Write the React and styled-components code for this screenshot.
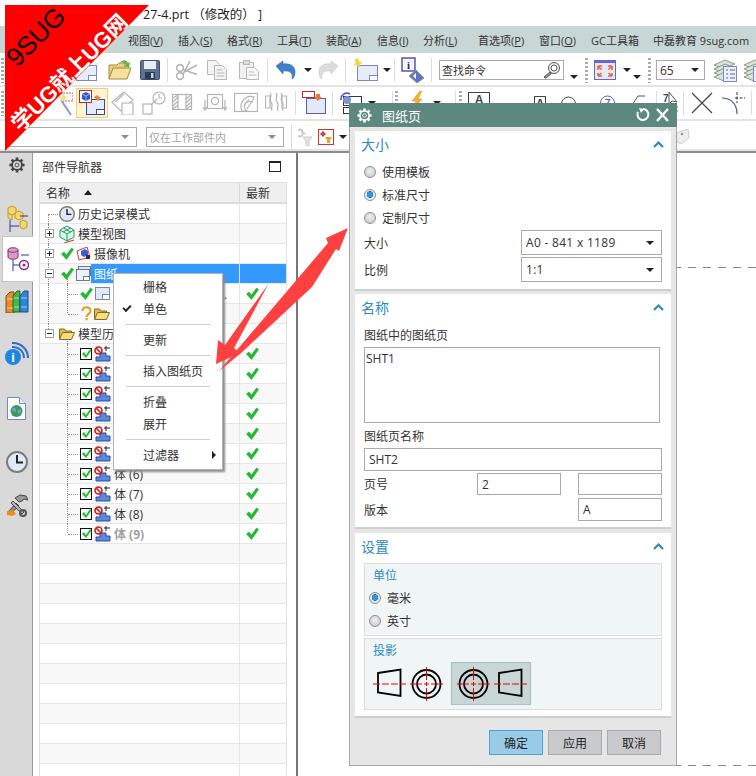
import styled, { createGlobalStyle } from "styled-components";

const GlobalStyle = createGlobalStyle`
  html, body {
    margin: 0;
    padding: 0;
    background: #fff;
  }
  * {
    box-sizing: border-box;
  }
`;

const FONT = `"Open Sans", "Noto Sans CJK SC", sans-serif`;

/* ---------- small drawings ---------- */

const Svg = styled.svg`
  display: block;
  flex: none;
`;

const ic = (w, h, children) => (
  <Svg width={w} height={h} viewBox={`0 0 ${w} ${h}`}>
    {children}
  </Svg>
);

const NewSheet = ({ star }) =>
  ic(26, 24, (
    <>
      <rect x="4.5" y="7.5" width="20" height="15" fill="#e6ecfa" stroke="#7b86cf" />
      <rect x="16.5" y="17.5" width="8" height="5" fill="#fff" stroke="#7b86cf" />
      {star && <path d="M5 0l1.4 3.4L10 4.6 6.8 6.6 6 10 4 7.2 0.4 7.6 2.6 4.6 1.6 1.6z" fill="#f3d64f" />}
    </>
  ));

const OpenFolder = () =>
  ic(24, 22, (
    <>
      <path d="M1 20V6h8l2-2h6v5" fill="#e9cf84" stroke="#a58a3a" />
      <path d="M1 20l4-11h18l-4 11z" fill="#f3e19d" stroke="#a58a3a" />
      <path d="M12 3c4-3 7-2 8 1l2-1-1 6-5-2 2-1c-1-2-3-3-6-3z" fill="#5fb84a" />
    </>
  ));

const Save = () =>
  ic(20, 20, (
    <>
      <rect x="0.5" y="0.5" width="19" height="19" rx="1" fill="#5d7190" stroke="#3e4e6c" />
      <rect x="4" y="1" width="12" height="8" fill="#e8eef6" />
      <rect x="5" y="12" width="10" height="7" fill="#2c3a55" />
      <rect x="11" y="13" width="2.5" height="5" fill="#c8d2e2" />
    </>
  ));

const Scissors = () =>
  ic(24, 22, (
    <g fill="none" stroke="#b5b5b5" strokeWidth="1.6">
      <circle cx="5" cy="17" r="3.4" />
      <circle cx="5" cy="9" r="3.4" />
      <path d="M8 15.5L15 2M8 10.5l14 5" />
      <path d="M9 13L22 6" />
    </g>
  ));

const Copy = () =>
  ic(22, 22, (
    <g fill="#f4f4f4" stroke="#b8b8b8">
      <path d="M1.5 1.5h8l4 4v10h-12z" />
      <path d="M8.5 6.5h8l4 4v10h-12z" />
      <path d="M10.5 11h6M10.5 14h8M10.5 17h8" fill="none" />
    </g>
  ));

const Paste = () =>
  ic(22, 22, (
    <g fill="#f1f1f1" stroke="#b8b8b8">
      <rect x="1.5" y="3.5" width="14" height="16" />
      <rect x="5.5" y="1.5" width="6" height="4" fill="#ddd" />
      <path d="M8.5 8.5h8l4 4v8h-12z" fill="#fafafa" />
      <path d="M10.5 13h6M10.5 16h8" fill="none" />
    </g>
  ));

const Undo = ({ grey }) => (
  <Svg width="20" height="20" viewBox="0 0 20 20" style={grey ? { transform: "scaleX(-1)" } : undefined}>
    <path
      d="M0 6l7-5v3c7-1 12 2 12 8 0 3-1 6-3 7 1-4 0-9-9-8v3z"
      fill={grey ? "#dcdcdc" : "#3f82c9"}
      stroke={grey ? "#c4c4c4" : "#2a62a8"}
      strokeWidth="0.6"
    />
  </Svg>
);

const InfoBadge = () =>
  ic(24, 26, (
    <>
      <rect x="1" y="1" width="13" height="13" fill="#f4f4ff" stroke="#4a4aa8" strokeWidth="1.4" />
      <text x="7.5" y="12" fontSize="11" fontWeight="700" fontFamily="Liberation Serif" textAnchor="middle" fill="#333">
        i
      </text>
      <path d="M15 13l8 8-7 5-8-7z" fill="#5f74c9" stroke="#899" />
      <path d="M15 16v6l-3-3z" fill="#fff" />
    </>
  ));

const Magnifier = () =>
  ic(18, 18, (
    <g fill="#f4f4f4" stroke="#555">
      <circle cx="11" cy="7" r="5.5" />
      <circle cx="11" cy="7" r="3" fill="#fff" />
      <path d="M7 11l-6 5 1.5 1.5 6-5z" fill="#999" />
    </g>
  ));

const FitView = () =>
  ic(22, 20, (
    <>
      <rect x="0.5" y="0.5" width="21" height="19" fill="#e8e8f5" stroke="#5f68d8" />
      <rect x="1" y="1" width="20" height="2" fill="#5f68d8" />
      <g stroke="#e8643c" strokeWidth="1.6" fill="none">
        <path d="M4 6h4M4 6v4M18 6h-4M18 6v4M4 16h4M4 16v-3M18 16h-4M18 16v-3M5 7l2.5 2.5M17 7l-2.5 2.5M5 15l2.5-2M17 15l-2.5-2" />
      </g>
    </>
  ));

const LayerList = () =>
  ic(24, 24, (
    <>
      <g fill="#d7e3d4" stroke="#8b9a8a">
        <path d="M1 7l11-5 10 4-11 5z" />
        <path d="M1 11l11-5 10 4-11 5z" />
        <path d="M1 15l11-5 10 4-11 5z" />
        <path d="M1 19l11-5 10 4-11 5z" />
      </g>
      <rect x="10.5" y="8.5" width="13" height="15" fill="#eef0ff" stroke="#7b86cf" />
      <path d="M13 12h2M17 12h5M13 16h2M17 16h5M13 20h2M17 20h5" stroke="#5a64b0" />
    </>
  ));

const Wand = () =>
  ic(16, 26, (
    <>
      <path d="M3 3h13v8H6" fill="#f6f6f6" stroke="#cc5d5d" strokeDasharray="2 1" />
      <path d="M4 10l10 15" stroke="#8f93d8" strokeWidth="2" />
      <path d="M6 3l1.5 3 3 1-2.5 2 .3 3-2.3-1.6L3 12l.8-3L2 7l3-.5z" fill="#f3e08a" />
    </>
  ));

const ActiveSheet = () =>
  ic(26, 26, (
    <>
      <rect x="7.5" y="9.5" width="18" height="15" fill="#e4eafa" stroke="#3648a8" />
      <rect x="17.5" y="19.5" width="8" height="5" fill="#fff" stroke="#3648a8" />
      <rect x="0.5" y="0.5" width="12" height="12" fill="#fff" stroke="#c22" />
      <path d="M3 4l4-2 4 2v5l-4 2-4-2z" fill="#2a59d0" />
      <path d="M3 4l4 2 4-2M7 6v5" stroke="#9cb4f0" fill="none" />
      <path d="M15 8c1-3 4-4 5-1l2 0-3 4-3-3z" fill="#e98a2e" />
    </>
  ));

const GreyTool = ({ kind }) => {
  const s = { fill: "none", stroke: "#b4b4b4", strokeWidth: 1.2 };
  const shapes = {
    angled: (
      <g {...s}>
        <path d="M1 11L13 1l9 8-12 11z" />
        <path d="M11 12h11v12H11z" fill="#fff" />
        <path d="M4 11l9-8" />
      </g>
    ),
    linked: (
      <g {...s}>
        <rect x="1" y="13" width="9" height="10" />
        <path d="M9 14l6-6" />
        <circle cx="17" cy="7" r="6" />
        <path d="M17 3v4h3" />
      </g>
    ),
    hatch: (
      <g {...s}>
        <rect x="0.5" y="3.5" width="19" height="15" />
        <path d="M6 4v14M14 4v14M1 7l5-3M1 11l5-5M1 15l5-5M1 18l5-4M14 8l5-4M14 12l5-5M14 16l5-5M14 18l5-3" />
      </g>
    ),
    detail: (
      <g {...s}>
        <rect x="4.5" y="3.5" width="15" height="14" />
        <circle cx="12" cy="10" r="3.6" />
        <path d="M2 9v9M0 16l2 3 2-3M22 9v9M20 16l2 3 2-3" />
      </g>
    ),
    section: (
      <g {...s}>
        <rect x="0.5" y="2.5" width="23" height="18" />
        <path d="M8 20a10 10 0 0 1 12-14l-2 5a5 5 0 0 0-5 9z" />
        <path d="M10 15l5-7M13 18l5-8" />
      </g>
    ),
    broken: (
      <g {...s}>
        <path d="M5 5H0.5v12H5zM17 5h4.500v12H17z" />
        <path d="M5 2c3 3-2 6 1 9s-1 6 1 9M11 2c3 3-2 6 1 9s-1 6 1 9M16 2c3 3-2 6 1 9s-1 6 1 9" />
      </g>
    ),
  };
  return ic(24, 24, shapes[kind]);
};

const SheetFromView = () =>
  ic(24, 24, (
    <>
      <rect x="0.5" y="0.5" width="12" height="6" fill="#fff" stroke="#c22" />
      <rect x="4.5" y="7.5" width="19" height="15" fill="#e4eafa" stroke="#5460c0" />
      <path d="M14 3h4v3l2 0-4 4-4-4h2z" fill="#e37a3a" />
    </>
  ));

const RotateView = () =>
  ic(22, 22, (
    <>
      <path d="M1 8a6 6 0 0 1 9-6" fill="none" stroke="#4a57c8" strokeWidth="1.6" />
      <rect x="3.500" y="4.500" width="18" height="9" fill="none" stroke="#333" />
      <circle cx="7" cy="8" r="4" fill="#7b93d8" />
      <rect x="3.500" y="15.500" width="9" height="6" fill="none" stroke="#333" />
    </>
  ));

const Lightning = () =>
  ic(23, 24, (
    <>
      <path d="M0 13v10M0 18h23M23 13v10" stroke="#c33" fill="none" />
      <path d="M16 0l-8 10h4l-4 10 10-12h-4l4-8z" fill="#f2b32c" stroke="#e58a1c" strokeWidth="0.5" />
    </>
  ));

const ABox = ({ w = 22, h = 22, boxed = true }) =>
  ic(w, h, (
    <>
      {boxed && <rect x="0.5" y="0.5" width={w - 1} height={h - 1} fill="#fff" stroke="#444" />}
      <text x={w / 2} y="12" fontSize="12" fontWeight="700" fontFamily="Liberation Sans" textAnchor="middle" fill="#444">
        A
      </text>
    </>
  ));

const HalfCircle = () =>
  ic(15, 20, (
    <g fill="none" stroke="#444">
      <circle cx="7.5" cy="11" r="7" />
      <path d="M0.500 11h14" />
    </g>
  ));

const NumberCircle = () =>
  ic(15, 20, (
    <>
      <circle cx="7.5" cy="10" r="7" fill="none" stroke="#5660c8" />
      <text x="7.5" y="14" fontSize="11" fontFamily="Liberation Sans" textAnchor="middle" fill="#444">
        7
      </text>
    </>
  ));

const Chamfer = () =>
  ic(14, 20, <path d="M1 20v-8L7 3h7" fill="none" stroke="#555" />);

const SevenMark = () =>
  ic(15, 24, (
    <>
      <text x="0" y="11" fontSize="10" fontWeight="700" fontFamily="Liberation Sans" fill="#444">
        7
      </text>
      <path d="M6 1v12l3-3 5 1z" fill="#fff" stroke="#555" />
      <path d="M13 20h2M13 16h2" stroke="#777" />
    </>
  ));

const CrossMark = () =>
  ic(22, 22, <path d="M1 1l20 20M21 1L1 21" stroke="#444" strokeWidth="1.2" />);

const ArcCross = () =>
  ic(23, 22, (
    <>
      <path d="M0 6c8 0 15 5 15 16" fill="none" stroke="#4555b8" strokeWidth="1.2" />
      <path d="M13 6h10M15 0v11" stroke="#333" strokeDasharray="3 1.5" />
    </>
  ));

const FilterGrey = () =>
  ic(14, 18, (
    <>
      <path d="M0 3c2-3 5-1 4 1l3 2M0 8c3 1 5 0 4-2" stroke="#c8c8c8" strokeWidth="2" fill="none" />
      <path d="M5 9h9l-3 4v5h-3v-5z" fill="#e4e4e4" stroke="#ccc" />
    </>
  ));

const FilterRed = () =>
  ic(16, 16, (
    <>
      <rect x="0.5" y="0.5" width="15" height="15" fill="#fff" stroke="#c33" />
      <path d="M5 2v6M2 5h6" stroke="#a33" />
      <circle cx="5" cy="5" r="1.6" fill="none" stroke="#a33" />
      <path d="M7 8h7l-2 3v3h-3v-3z" fill="#eba421" />
    </>
  ));

const PageTag = () =>
  ic(15, 15, (
    <>
      <path d="M1 4l12-4 1 9-8 6-4-2z" fill="#eee" stroke="#ccc" />
      <circle cx="7" cy="5" r="1.3" fill="#999" />
    </>
  ));

const Gear = ({ size = 14, color = "#444", hole = "#d9d9d9" }) => (
  <Svg width={size} height={size} viewBox="0 0 18 18">
    <g fill={color}>
      <circle cx="9" cy="9" r="6.5" />
      {[0, 45, 90, 135, 180, 225, 270, 315].map((a) => (
        <rect key={a} x="7.5" y="0.5" width="3" height="3.5" transform={`rotate(${a} 9 9)`} />
      ))}
    </g>
    <circle cx="9" cy="9" r="4.5" fill={hole} />
    <circle cx="9" cy="9" r="2.2" fill="none" stroke={color} />
  </Svg>
);

const Clock = ({ size = 16 }) => (
  <Svg width={size} height={size} viewBox="0 0 22 22">
    <circle cx="11" cy="11" r="10" fill="#dfe9f7" stroke="#7d7d7d" strokeWidth="2" />
    <path d="M11 4v7.500h6" fill="none" stroke="#222" strokeWidth="2" />
  </Svg>
);

const ModelViewIcon = () =>
  ic(16, 18, (
    <>
      <path d="M8 1l7 4v7l-7 4-7-4V5z" fill="#e2f5e9" stroke="#1f9d6a" />
      <path d="M1 5l7 4 7-4M8 9v7M4.500 3l7 4M11.500 3L4 7" fill="none" stroke="#1f9d6a" />
      <path d="M5 18l10-3" stroke="#c33" />
    </>
  ));

const Tick = ({ size = 13 }) => (
  <Svg width={size} height={size} viewBox="0 0 13 13">
    <path d="M0.500 7l2.500-2 2.500 3L10.500 1 12.500 2.500 5.500 12.500z" fill="#1fbe2e" stroke="#0c9c1e" strokeWidth="0.5" />
  </Svg>
);

const BoxTick = () =>
  ic(12, 13, (
    <>
      <rect x="0.5" y="1.5" width="11" height="11" fill="#fff" stroke="#111" />
      <path d="M2 7l2-2 2 3 4-6 1.500 1.500L6 11z" fill="#1fbe2e" />
    </>
  ));

const CameraIcon = () =>
  ic(15, 15, (
    <>
      <path d="M1 5l10-4 3 10-11 3z" fill="#fff" stroke="#d33" />
      <path d="M5 5l4-2 3 2v4l-4 2-3-2z" fill="#3a5fcf" />
      <rect x="10" y="9" width="4" height="4" fill="#333" />
    </>
  ));

const StackSheet = () =>
  ic(15, 15, (
    <>
      <rect x="2.500" y="0.500" width="12" height="9" fill="#dfe4f2" stroke="#71798f" />
      <rect x="0.500" y="3.500" width="13" height="11" fill="#eef1f8" stroke="#71798f" />
      <rect x="7.500" y="10.500" width="6" height="4" fill="#fff" stroke="#71798f" />
    </>
  ));

const SheetMini = () =>
  ic(15, 13, (
    <>
      <rect x="0.500" y="0.500" width="14" height="12" fill="#e3e8f6" stroke="#7b86b5" />
      <rect x="7.500" y="7.500" width="7" height="5" fill="#fff" stroke="#7b86b5" />
    </>
  ));

const FolderIcon = () =>
  ic(16, 13, (
    <>
      <path d="M0.500 12V2h5l1 2h6v2" fill="#e2bd4f" stroke="#8a6b1a" />
      <path d="M0.500 12.500l3-7h12l-3 7z" fill="#f6dc84" stroke="#8a6b1a" />
    </>
  ));

const Question = () =>
  ic(11, 15, (
    <>
      <path d="M1.500 5c0-5 8-5 8 0 0 3-4 3-4 6" fill="none" stroke="#d9a620" strokeWidth="2.2" />
      <rect x="4.500" y="12" width="2.200" height="2.200" fill="#d9a620" />
    </>
  ));

const BodyIcon = () =>
  ic(17, 16, (
    <>
      <path d="M12 0v5M10 2h6" stroke="#222" />
      <path d="M6 7h6v3h4v5H2v-4h4z" fill="#5f86d8" stroke="#2b4fa3" />
      <circle cx="4.500" cy="4.500" r="3.500" fill="#fff" stroke="#d31717" strokeWidth="1.600" />
      <path d="M2 2l5 5" stroke="#d31717" strokeWidth="1.600" />
    </>
  ));

const AssemblyNav = () =>
  ic(22, 27, (
    <>
      <g fill="#f6d86a" stroke="#c39a2c">
        <path d="M2 3l4-2 4 2v5l-4 2-4-2z" />
        <path d="M9 8l4-2 4 2v5l-4 2-4-2z" />
        <path d="M2 8l4 2 4-2M6 10v5l-4-2V8" />
        <path d="M14 17l3-2 4 2v5l-4 2-3-2z" />
      </g>
      <path d="M4 15v12M4 21h9M14 11h8" fill="none" stroke="#2336a8" />
    </>
  ));

const PartNav = () =>
  ic(22, 25, (
    <>
      <path d="M1 3c0-3 10-3 10 0v7c0 3-10 3-10 0z" fill="#d99cc8" stroke="#8b2c78" />
      <path d="M1 3c0 3 10 3 10 0" fill="none" stroke="#8b2c78" />
      <path d="M6 13v11M6 18h6M14 8h8" fill="none" stroke="#2336a8" />
      <circle cx="17" cy="18" r="4.500" fill="#fff" stroke="#8b2c78" strokeWidth="1.400" />
      <circle cx="17" cy="18" r="1.500" fill="#8b2c78" />
    </>
  ));

const BooksIcon = () =>
  ic(24, 24, (
    <>
      <path d="M1 7l4-4h4v21H1z" fill="#e78a29" stroke="#8a4d10" />
      <path d="M8 7l4-5h3v21H8z" fill="#43b648" stroke="#206b23" />
      <path d="M15 7l4-5h4v21h-8z" fill="#2f86d8" stroke="#164f8d" />
      <path d="M2 10h6M2 19h6M9 9h5M9 18h5M16 9h6M16 18h6" stroke="#fff" strokeOpacity="0.6" />
    </>
  ));

const InfoWaves = () =>
  ic(25, 25, (
    <>
      <path d="M8 1a15 15 0 0 1 16 15M8 5a11 11 0 0 1 12 11" fill="none" stroke="#2f6fc4" strokeWidth="2" />
      <circle cx="9" cy="15" r="8" fill="#1f86df" />
      <text x="9" y="20" fontSize="13" fontWeight="700" fontFamily="Liberation Sans" textAnchor="middle" fill="#fff">
        i
      </text>
    </>
  ));

const WebDoc = () =>
  ic(19, 23, (
    <>
      <path d="M0.500 0.500h12l6 6v16H0.500z" fill="#fff" stroke="#6b8cc4" />
      <path d="M12.500 0.500v6h6" fill="#e4ecf8" stroke="#6b8cc4" />
      <circle cx="9.500" cy="14" r="6" fill="#3d9a58" />
      <path d="M5 11c3-1 5 1 4 4-2 0-4-1-4-4zM12 17c-2-2-1-5 1-5 2 2 1 4-1 5z" fill="#6aa3e2" />
    </>
  ));

const ToolsIcon = () =>
  ic(22, 23, (
    <>
      <path d="M10 9L3 17l2 2 8-7z" fill="#8f8f8f" stroke="#444" />
      <path d="M9 4l5-3 6 1 2 4-4-1-2 2-3 1z" fill="#9a9a9a" stroke="#444" />
      <path d="M7 7l11 11-2 2L5 9z" fill="#b5b5b5" stroke="#444" />
      <path d="M1 17l6-1 3 4-4 2-5-1z" fill="#f28a20" />
      <circle cx="17" cy="19" r="3" fill="none" stroke="#555" strokeWidth="2" />
    </>
  ));

const Chevron = () =>
  ic(11, 7, <path d="M1 6l4.500-4.500L10 6" fill="none" stroke="#2d8bc2" strokeWidth="2.200" />);

const ProjTrapezoid = () =>
  ic(33, 40, (
    <>
      <path d="M5 9l22.500-3.500v26.500L5 28.500z" fill="none" stroke="#000" strokeWidth="1.800" />
      <path d="M0 20h33" stroke="#e00" strokeDasharray="7 2" />
    </>
  ));

const ProjCircle = () =>
  ic(33, 40, (
    <>
      <circle cx="16.500" cy="20" r="14" fill="none" stroke="#000" strokeWidth="1.800" />
      <circle cx="16.500" cy="20" r="9.500" fill="none" stroke="#000" strokeWidth="1.800" />
      <path d="M0 20h12M14 20h5M21 20h12M16.500 3v13M16.500 18v4M16.500 24v13" stroke="#e00" />
    </>
  ));

/* ---------- toolbars ---------- */

const Page = styled.div`
  position: relative;
  width: 756px;
  height: 776px;
  overflow: hidden;
  background: #fff;
  color: #333;
  font-family: ${FONT};
  font-size: 12px;
`;

const TitleBar = styled.div`
  height: 26px;
  padding-left: 143px;
  display: flex;
  align-items: center;
  font-size: 12.5px;
  color: #222;
`;

const MenuBar = styled.div`
  height: 27px;
  padding-left: 128px;
  display: flex;
  align-items: center;
  background: #c8d6d5;
  color: #333;
  font-size: 11px;
`;

const MenuItem = styled.span`
  flex: none;
  width: ${(p) => p.$w}px;
  white-space: nowrap;
`;

const ToolRow = styled.div`
  height: ${(p) => p.$h}px;
  padding-top: ${(p) => p.$pt || 0}px;
  display: flex;
  align-items: center;
  border-bottom: 2px solid #e4e4e4;
`;

const Slot = styled.div`
  flex: none;
  width: ${(p) => p.$w}px;
  margin-left: ${(p) => p.$ml || 0}px;
  display: flex;
  align-items: center;
  justify-content: center;
`;

const Active = styled(Slot)`
  height: 30px;
  background: #fdf4d3;
  border: 1px solid #f2cf72;
`;

const Sep = styled.div`
  flex: none;
  width: 1px;
  height: 24px;
  margin-left: ${(p) => p.$ml || 0}px;
  background: #dcdcdc;
`;

const Grip = styled.div`
  flex: none;
  width: 3px;
  height: 25px;
  margin-left: ${(p) => p.$ml || 0}px;
  background: repeating-linear-gradient(#aaa 0 2px, #fff 2px 4px);
`;

const Caret = styled.div`
  flex: none;
  width: 0;
  height: 0;
  margin-left: ${(p) => p.$ml || 0}px;
  margin-top: ${(p) => (p.$low ? 13 : 0)}px;
  margin-right: ${(p) => p.$mr || 0}px;
  border-left: 4.5px solid transparent;
  border-right: 4.5px solid transparent;
  border-top: 4.5px solid ${(p) => (p.$grey ? "#8c8c8c" : "#222")};
`;

const SearchBox = styled.div`
  flex: none;
  width: 125px;
  height: 20px;
  margin-left: ${(p) => p.$ml}px;
  padding: 0 2px 0 2px;
  display: flex;
  align-items: center;
  justify-content: space-between;
  border: 1px solid #aaa;
  color: #333;
  font-size: 11px;
`;

const ZoomSelect = styled.div`
  flex: none;
  width: 49px;
  height: 20px;
  margin-left: ${(p) => p.$ml}px;
  padding: 0 5px 0 3px;
  display: flex;
  align-items: center;
  justify-content: space-between;
  border: 1px solid #aaa;
`;

const FilterCombo = styled.div`
  flex: none;
  width: ${(p) => p.$w}px;
  height: 20px;
  margin-left: ${(p) => p.$ml}px;
  padding: 0 7px 0 2px;
  display: flex;
  align-items: center;
  justify-content: space-between;
  border: 1px solid #aaa;
  color: #a6a6a6;
  font-size: 11px;
  white-space: nowrap;
`;

const MENUS = [
  ["视图", "V", 50],
  ["插入", "S", 49],
  ["格式", "R", 50],
  ["工具", "T", 49],
  ["装配", "A", 51],
  ["信息", "I", 46],
  ["分析", "L", 55],
  ["首选项", "P", 61],
  ["窗口", "O", 52],
];

const Toolbars = () => (
  <>
    <TitleBar>27-4.prt （修改的） ]</TitleBar>
    <MenuBar>
      {MENUS.map(([label, key, w]) => (
        <MenuItem key={label} $w={w}>
          {label}(<u>{key}</u>)
        </MenuItem>
      ))}
      <MenuItem $w={62}>GC工具箱</MenuItem>
      <MenuItem $w={103}>中磊教育 9sug.com</MenuItem>
    </MenuBar>

    <ToolRow $h={34} $pt={2}>
      <Grip $ml={1} />
      <Slot $w={26} $ml={68}><NewSheet /></Slot>
      <Slot $w={24} $ml={10}><OpenFolder /></Slot>
      <Slot $w={20} $ml={8}><Save /></Slot>
      <Sep $ml={7} />
      <Slot $w={24} $ml={7}><Scissors /></Slot>
      <Slot $w={22} $ml={7}><Copy /></Slot>
      <Slot $w={22} $ml={10}><Paste /></Slot>
      <Sep $ml={7} />
      <Slot $w={20} $ml={8}><Undo /></Slot>
      <Caret $ml={8} />
      <Slot $w={20} $ml={6}><Undo grey /></Slot>
      <Sep $ml={7} />
      <Slot $w={26} $ml={7}><NewSheet star /></Slot>
      <Caret $ml={4} />
      <Sep $ml={3} />
      <Slot $w={24} $ml={6}><InfoBadge /></Slot>
      <Sep $ml={6} />
      <SearchBox $ml={7}>
        查找命令
        <Magnifier />
      </SearchBox>
      <Caret $ml={6} $low />
      <Grip $ml={7} />
      <Slot $w={22} $ml={6}><FitView /></Slot>
      <Caret $ml={7} />
      <Caret $ml={2} $low />
      <Grip $ml={7} />
      <ZoomSelect $ml={5}>
        65
        <Caret />
      </ZoomSelect>
      <Slot $w={24} $ml={8}><LayerList /></Slot>
      <Slot $w={24} $ml={6}><LayerList /></Slot>
    </ToolRow>

    <ToolRow $h={34}>
      <Grip $ml={1} />
      <Slot $w={16} $ml={53}><Wand /></Slot>
      <Active $w={32} $ml={3}><ActiveSheet /></Active>
      <Slot $w={24} $ml={3}><GreyTool kind="angled" /></Slot>
      <Slot $w={24} $ml={7}><GreyTool kind="linked" /></Slot>
      <Slot $w={20} $ml={8}><GreyTool kind="hatch" /></Slot>
      <Slot $w={24} $ml={9}><GreyTool kind="detail" /></Slot>
      <Slot $w={24} $ml={7}><GreyTool kind="section" /></Slot>
      <Slot $w={22} $ml={8}><GreyTool kind="broken" /></Slot>
      <Sep $ml={7} />
      <Slot $w={24} $ml={6}><SheetFromView /></Slot>
      <Sep $ml={6} />
      <Slot $w={22} $ml={7}><RotateView /></Slot>
      <Caret $ml={6} />
      <Sep $ml={16} />
      <Grip $ml={2} />
      <Slot $w={23} $ml={6}><Lightning /></Slot>
      <Caret $ml={6} />
      <Sep $ml={14} />
      <Grip $ml={3} />
      <Slot $w={22} $ml={6}><ABox /></Slot>
      <Slot $w={12} $ml={44}><ABox w={12} h={14} /></Slot>
      <Slot $w={15} $ml={15}><HalfCircle /></Slot>
      <Slot $w={15} $ml={24}><NumberCircle /></Slot>
      <Slot $w={14} $ml={16}><Chamfer /></Slot>
      <Sep $ml={11} />
      <Slot $w={15} $ml={6}><SevenMark /></Slot>
      <Sep $ml={5} />
      <Slot $w={22} $ml={7}><CrossMark /></Slot>
      <Slot $w={23} $ml={9}><ArcCross /></Slot>
      <Sep $ml={6} />
    </ToolRow>

    <ToolRow $h={30} $pt={3}>
      <FilterCombo $w={132} $ml={5}>
        <span />
        <Caret $grey />
      </FilterCombo>
      <FilterCombo $w={138} $ml={9}>
        仅在工作部件内
        <Caret $grey />
      </FilterCombo>
      <Sep $ml={7} />
      <Slot $w={14} $ml={6}><FilterGrey /></Slot>
      <Slot $w={16} $ml={6}><FilterRed /></Slot>
      <Caret $ml={5} />
      <Slot $w={15} $ml={328}><PageTag /></Slot>
    </ToolRow>
  </>
);

/* ---------- left rail and part navigator ---------- */

const Body = styled.div`
  height: 625px;
  display: flex;
  border-top: 2px solid #8c8c8c;
`;

const Rail = styled.div`
  flex: none;
  width: 33px;
  display: flex;
  flex-direction: column;
  align-items: flex-end;
  background: #d9d9d9;
  border-right: 1px solid #9a9a9a;
`;

const RailTab = styled.div`
  width: 31px;
  height: ${(p) => p.$h}px;
  margin-top: ${(p) => p.$mt || 0}px;
  margin-right: ${(p) => (p.$active ? -1 : 0)}px;
  display: flex;
  align-items: center;
  justify-content: center;
  background: ${(p) => (p.$active ? "#fff" : "transparent")};
  border: ${(p) => (p.$active ? "1px solid #c4c4c4" : "none")};
  border-right: none;
`;

const Navigator = styled.div`
  flex: none;
  width: 263px;
  padding: 0 9px 0 6px;
  display: flex;
  flex-direction: column;
`;

const NavHead = styled.div`
  height: 29px;
  padding: 0 6px 2px 3px;
  display: flex;
  align-items: center;
  justify-content: space-between;
`;

const MaxBox = styled.div`
  width: 12px;
  height: 11px;
  border: 1px solid #222;
  border-top-width: 2px;
`;

const Table = styled.div`
  flex: 1;
  border: 1px solid #dfdfdf;
  border-bottom: none;
  overflow: hidden;
`;

const HeadRow = styled.div`
  height: 21px;
  display: grid;
  grid-template-columns: 200px 1fr;
  background: #efefef;
  border-bottom: 2px solid #dcdcdc;
`;

const HeadCell = styled.div`
  padding-left: 6px;
  display: flex;
  align-items: center;
  gap: 14px;
  border-right: ${(p) => (p.$last ? "none" : "1px solid #d6d6d6")};
`;

const SortUp = styled.div`
  width: 0;
  height: 0;
  border-left: 4.5px solid transparent;
  border-right: 4.5px solid transparent;
  border-bottom: 5px solid #222;
`;

const Row = styled.div`
  height: 20px;
  display: grid;
  grid-template-columns: 200px 1fr;
  background: ${(p) => (p.$alt ? "#f8f8f8" : "#fff")};
  border-bottom: 1px solid #e6e6e6;
`;

const NameCell = styled.div`
  position: relative;
  padding-left: ${(p) => p.$pad}px;
  display: flex;
  align-items: center;
  border-right: 1px solid #e6e6e6;
  white-space: nowrap;
`;

const LatestCell = styled.div`
  padding-left: 6px;
  display: flex;
  align-items: center;
  background: ${(p) => (p.$sel ? "#3399ff" : "transparent")};
`;

const VGuide = styled.span`
  position: absolute;
  left: ${(p) => p.$x}px;
  top: ${(p) => (p.$from ? 10 : 0)}px;
  bottom: ${(p) => (p.$to ? 10 : -1)}px;
  border-left: 1px dotted #8a8a8a;
`;

const HGuide = styled.span`
  position: absolute;
  left: ${(p) => p.$x}px;
  top: 10px;
  width: 10px;
  border-top: 1px dotted #8a8a8a;
`;

const Expander = styled.span`
  position: relative;
  flex: none;
  width: 9px;
  height: 9px;
  margin-right: ${(p) => p.$mr}px;
  background: #fff;
  border: 1px solid #a0a0a0;

  &::before {
    content: "";
    position: absolute;
    left: 1px;
    top: 3px;
    width: 5px;
    height: 1px;
    background: #222;
  }

  &::after {
    content: "";
    display: ${(p) => (p.$open ? "none" : "block")};
    position: absolute;
    left: 3px;
    top: 1px;
    width: 1px;
    height: 5px;
    background: #222;
  }
`;

const Lead = styled.span`
  position: relative;
  flex: none;
  margin-left: ${(p) => p.$ml || 0}px;
`;

const Label = styled.span`
  margin-left: 3px;
  color: ${(p) => (p.$dim ? "#a0a0a0" : "#333")};
  font-weight: ${(p) => (p.$dim ? 700 : 400)};
  ${(p) => p.$clip && "width: 120px; overflow: hidden; text-overflow: ellipsis;"}
`;

const SelLabel = styled.span`
  flex: 1;
  align-self: stretch;
  padding-left: 3px;
  display: flex;
  align-items: center;
  background: #3399ff;
  color: #fff;
`;

const bodyRow = (n, dim) => ({
  pad: 40,
  branch: n === 9 ? "end" : "full",
  hb: true,
  lead: (
    <>
      <Lead><BoxTick /></Lead>
      <Lead $ml={2}><BodyIcon /></Lead>
    </>
  ),
  text: `体 (${n})`,
  dim,
  latest: true,
});

const TREE = [
  { pad: 19, trunk: "start", ht: true, lead: <Lead><Clock /></Lead>, text: "历史记录模式" },
  { pad: 5, trunk: "full", exp: "+", lead: <Lead><ModelViewIcon /></Lead>, text: "模型视图" },
  {
    pad: 5,
    trunk: "full",
    exp: "+",
    mr: 7,
    lead: (
      <>
        <Lead><Tick /></Lead>
        <Lead $ml={2}><CameraIcon /></Lead>
      </>
    ),
    text: "摄像机",
  },
  {
    pad: 5,
    trunk: "full",
    exp: "-",
    mr: 7,
    branch: "start",
    sel: true,
    lead: (
      <>
        <Lead><Tick /></Lead>
        <Lead $ml={2}><StackSheet /></Lead>
      </>
    ),
    text: "图纸",
  },
  {
    pad: 40,
    trunk: "full",
    branch: "full",
    hb: true,
    lead: (
      <>
        <Lead><Tick /></Lead>
        <Lead $ml={2}><SheetMini /></Lead>
      </>
    ),
    text: "图纸页 \"SHT1\" （工作的-活动）",
    clip: true,
    latest: true,
  },
  {
    pad: 41,
    trunk: "full",
    branch: "end",
    hb: true,
    lead: (
      <>
        <Lead><Question /></Lead>
        <Lead $ml={2}><FolderIcon /></Lead>
      </>
    ),
  },
  { pad: 5, trunk: "end", exp: "-", branch: "start", lead: <Lead><FolderIcon /></Lead>, text: "模型历史记录" },
  ...[0, 1, 2, 3, 4, 5, 6, 7, 8].map((n) => bodyRow(n)),
  bodyRow(9, true),
  ...Array.from({ length: 12 }, () => ({ pad: 0 })),
];

const TreeRow = ({ row, alt }) => (
  <Row $alt={alt}>
    <NameCell $pad={row.pad}>
      {row.trunk && <VGuide $x={8} $from={row.trunk === "start"} $to={row.trunk === "end"} />}
      {row.branch && <VGuide $x={27} $from={row.branch === "start"} $to={row.branch === "end"} />}
      {row.ht && <HGuide $x={8} />}
      {row.hb && <HGuide $x={28} />}
      {row.exp && <Expander $open={row.exp === "-"} $mr={row.mr || 5} />}
      {row.lead}
      {row.sel ? <SelLabel>{row.text}</SelLabel> : row.text && <Label $dim={row.dim} $clip={row.clip}>{row.text}</Label>}
    </NameCell>
    <LatestCell $sel={row.sel}>{row.latest && <Tick />}</LatestCell>
  </Row>
);

const LeftPanels = () => (
  <>
    <Rail>
      <RailTab $h={24}><Gear size={16} /></RailTab>
      <RailTab $h={36} $mt={23}><AssemblyNav /></RailTab>
      <RailTab $h={46} $active><PartNav /></RailTab>
      <RailTab $h={38}><BooksIcon /></RailTab>
      <RailTab $h={40} $mt={14}><InfoWaves /></RailTab>
      <RailTab $h={40} $mt={14}><WebDoc /></RailTab>
      <RailTab $h={40} $mt={14}><Clock size={22} /></RailTab>
      <RailTab $h={40} $mt={3}><ToolsIcon /></RailTab>
    </Rail>
    <Navigator>
      <NavHead>
        部件导航器
        <MaxBox />
      </NavHead>
      <Table>
        <HeadRow>
          <HeadCell>
            名称
            <SortUp />
          </HeadCell>
          <HeadCell $last>最新</HeadCell>
        </HeadRow>
        {TREE.map((row, i) => (
          <TreeRow key={i} row={row} alt={i % 2 === 1} />
        ))}
      </Table>
    </Navigator>
  </>
);

/* ---------- drawing canvas ---------- */

const Canvas = styled.div`
  flex: 1;
  padding: 114px 0 0 60px;
  border-left: 2px solid #777;
`;

const SheetFrame = styled.div`
  height: 499px;
  background:
    repeating-linear-gradient(90deg, #888 0 8px, transparent 8px 15px) top / 100% 1px no-repeat,
    repeating-linear-gradient(90deg, #888 0 8px, transparent 8px 15px) bottom / 100% 1px no-repeat;
`;

/* ---------- context menu ---------- */

const ContextMenu = styled.div`
  position: absolute;
  left: 113px;
  top: 273px;
  width: 110px;
  height: 197px;
  padding-top: 2px;
  background: #fff;
  border: 1px solid #b4b4b4;
  box-shadow: 2px 2px 2px #8a8a8a;
`;

const MenuEntry = styled.div`
  position: relative;
  height: 22px;
  padding-left: 29px;
  display: flex;
  align-items: center;
`;

const MenuCheck = styled.span`
  position: absolute;
  left: 9px;
  top: 7px;
  width: 8px;
  height: 5px;
  border-left: 2px solid #222;
  border-bottom: 2px solid #222;
  transform: rotate(-45deg);
`;

const SubArrow = styled.span`
  position: absolute;
  right: 6px;
  top: 7px;
  border-top: 4px solid transparent;
  border-bottom: 4px solid transparent;
  border-left: 4px solid #222;
`;

const MenuSep = styled.div`
  height: 1px;
  margin: 4px 12px;
  background: #cfcfcf;
`;

const TreeMenu = () => (
  <ContextMenu>
    <MenuEntry>栅格</MenuEntry>
    <MenuEntry>
      <MenuCheck />
      单色
    </MenuEntry>
    <MenuSep />
    <MenuEntry>更新</MenuEntry>
    <MenuSep />
    <MenuEntry>插入图纸页</MenuEntry>
    <MenuSep />
    <MenuEntry>折叠</MenuEntry>
    <MenuEntry>展开</MenuEntry>
    <MenuSep />
    <MenuEntry>
      过滤器
      <SubArrow />
    </MenuEntry>
  </ContextMenu>
);

/* ---------- drawing sheet dialog ---------- */

const Dialog = styled.div`
  position: absolute;
  left: 349px;
  top: 103px;
  width: 328px;
  height: 663px;
  display: flex;
  flex-direction: column;
  background: #e6e6e6;
  border-right: 1px solid #a8a8a8;
  border-bottom: 1px solid #a8a8a8;
  border-left: 1px solid #a8a8a8;
`;

const DialogHead = styled.div`
  flex: none;
  height: 24px;
  margin: 0 -1px;
  padding: 0 8px;
  display: flex;
  align-items: center;
  background: #5c8880;
  color: #fff;
  font-size: 13px;
`;

const HeadTitle = styled.span`
  flex: 1;
  margin-left: 10px;
`;

const Section = styled.section`
  flex: none;
  height: ${(p) => p.$h}px;
  margin: ${(p) => p.$mt}px 5px 0;
  padding: 0 9px;
  background: #fff;
  border-bottom: 2px solid #cfcfcf;
`;

const SectionHead = styled.div`
  height: 26px;
  margin: 0 -2px 0 -3px;
  display: flex;
  align-items: center;
  justify-content: space-between;
  color: #2d8bc2;
  font-size: 14px;
`;

const RadioGap = styled.div`
  height: 3px;
`;

const RadioRow = styled.label`
  height: 23px;
  margin-left: ${(p) => p.$ml || 0}px;
  display: flex;
  align-items: center;
  gap: 6px;
`;

const Radio = styled.span`
  flex: none;
  width: 12px;
  height: 12px;
  border-radius: 50%;
  border: 1px solid #8f8f8f;
  background: ${(p) =>
    p.$on
      ? "radial-gradient(circle at 50% 45%, #2a9be0 0 2.5px, #0a5c98 3px, #e8e8e8 3.5px)"
      : "radial-gradient(circle at 50% 40%, #f0f0f0, #c4c4c4)"};
`;

const FieldRow = styled.div`
  height: ${(p) => p.$h}px;
  margin-top: ${(p) => p.$mt || 0}px;
  display: flex;
  align-items: center;
  justify-content: space-between;
`;

const Select = styled.div`
  flex: none;
  width: 141px;
  height: 25px;
  padding: 0 7px 0 4px;
  display: flex;
  align-items: center;
  justify-content: space-between;
  border: 1px solid #aaa;
  color: #333;
  letter-spacing: 0.3px;
`;

const FieldLabel = styled.div`
  height: ${(p) => p.$h}px;
  margin-top: ${(p) => p.$mt || 0}px;
  display: flex;
  align-items: center;
`;

const ListBox = styled.div`
  width: 296px;
  height: 76px;
  padding: 2px 1px;
  border: 1px solid #aaa;
`;

const Input = styled.div`
  flex: none;
  width: ${(p) => p.$w}px;
  height: ${(p) => p.$h}px;
  margin-left: ${(p) => p.$ml || 0}px;
  padding: 0 4px;
  display: flex;
  align-items: center;
  border: 1px solid #aaa;
`;

const Spread = styled.div`
  flex: 1;
`;

const Group = styled.div`
  height: ${(p) => p.$h}px;
  margin-top: ${(p) => p.$mt}px;
  padding: 0 6px;
  background: #f0f5f5;
  border: 1px solid #d8dcdc;
`;

const GroupTitle = styled.div`
  height: 22px;
  padding-left: 2px;
  display: flex;
  align-items: center;
  color: #2d8bc2;
  font-size: 12px;
`;

const ProjRow = styled.div`
  margin-top: 1px;
  display: flex;
`;

const ProjTile = styled.div`
  width: 80px;
  height: 43px;
  padding-left: ${(p) => (p.$on ? 5 : 1)}px;
  display: flex;
  align-items: center;
  gap: 4px;
  background: ${(p) => (p.$on ? "#c8d6d5" : "transparent")};
  border: 1px solid ${(p) => (p.$on ? "#a3c2bd" : "transparent")};
`;

const DialogActions = styled.div`
  flex: none;
  margin-top: 12px;
  padding-right: 15px;
  display: flex;
  justify-content: flex-end;
  gap: 5px;
`;

const ActionButton = styled.button`
  width: 54px;
  height: 25px;
  padding: 0;
  font: inherit;
  color: #222;
  background: ${(p) => (p.$primary ? "#9acbe6" : "#c8cacd")};
  border: 1px solid ${(p) => (p.$primary ? "#4aa3d8" : "#aaa")};
`;

const SheetDialog = () => (
  <Dialog>
    <DialogHead>
      <Gear size={15} color="#fff" hole="#5c8880" />
      <HeadTitle>图纸页</HeadTitle>
      <Svg width="34" height="16" viewBox="0 0 34 16">
        <path d="M8 2a5.500 5.500 0 1 1-5 3" fill="none" stroke="#fff" strokeWidth="2" />
        <path d="M4 1l5 1-3 4z" fill="#fff" />
        <path d="M22 2l11 12M33 2L22 14" stroke="#fff" strokeWidth="2.400" />
      </Svg>
    </DialogHead>

    <Section $h={160} $mt={4}>
      <SectionHead>大小<Chevron /></SectionHead>
      <RadioGap />
      <RadioRow><Radio />使用模板</RadioRow>
      <RadioRow><Radio $on />标准尺寸</RadioRow>
      <RadioRow><Radio />定制尺寸</RadioRow>
      <FieldRow $h={25} $mt={1}>
        大小
        <Select>A0 - 841 x 1189<Caret /></Select>
      </FieldRow>
      <FieldRow $h={25} $mt={2}>
        比例
        <Select>1:1<Caret /></Select>
      </FieldRow>
    </Section>

    <Section $h={235} $mt={3}>
      <SectionHead>名称<Chevron /></SectionHead>
      <FieldLabel $h={24} $mt={3}>图纸中的图纸页</FieldLabel>
      <ListBox>SHT1</ListBox>
      <FieldLabel $h={25}>图纸页名称</FieldLabel>
      <Input $w={298} $h={23}>SHT2</Input>
      <FieldRow $h={22} $mt={2}>
        页号
        <Spread />
        <Input $w={84} $h={22}>2</Input>
        <Input $w={84} $h={22} $ml={17} />
      </FieldRow>
      <FieldRow $h={23} $mt={3}>
        版本
        <Input $w={84} $h={23}>A</Input>
      </FieldRow>
    </Section>

    <Section $h={185} $mt={4}>
      <SectionHead>设置<Chevron /></SectionHead>
      <Group $h={73} $mt={4}>
        <GroupTitle>单位</GroupTitle>
        <RadioRow $ml={-2}><Radio $on />毫米</RadioRow>
        <RadioRow $ml={-2}><Radio />英寸</RadioRow>
      </Group>
      <Group $h={72} $mt={2}>
        <GroupTitle>投影</GroupTitle>
        <ProjRow>
          <ProjTile><ProjTrapezoid /><ProjCircle /></ProjTile>
          <ProjTile $on><ProjCircle /><ProjTrapezoid /></ProjTile>
        </ProjRow>
      </Group>
    </Section>

    <DialogActions>
      <ActionButton $primary>确定</ActionButton>
      <ActionButton>应用</ActionButton>
      <ActionButton>取消</ActionButton>
    </DialogActions>
  </Dialog>
);

/* ---------- annotations lying over the page ---------- */

const ArrowLayer = styled.svg`
  position: absolute;
  left: 0;
  top: 0;
  pointer-events: none;
`;

const Arrows = () => (
  <ArrowLayer width="756" height="776" viewBox="0 0 756 776">
    <polygon
      points="348,228 326,238 328,243 219,371 240,354 312,287 336,249 339,251"
      fill="#ff4040"
    />
    <polygon
      points="269,283 225,345 218,340 216,364 240,353 234,348"
      fill="#ff4040"
    />
  </ArrowLayer>
);

const Ribbon = styled.div`
  position: absolute;
  left: 5px;
  top: 5px;
  width: 144px;
  height: 146px;
  background: #ff0000;
  clip-path: polygon(0 0, 100% 0, 0 100%);
`;

const RibbonBrand = styled.span`
  position: absolute;
  left: 31px;
  top: 32px;
  transform: translate(-50%, -50%) rotate(-45deg);
  color: #000;
  font: 26px "Liberation Sans", sans-serif;
  white-space: nowrap;
`;

const RibbonSlogan = styled.span`
  position: absolute;
  left: 63px;
  top: 66px;
  transform: translate(-50%, -50%) rotate(-45deg);
  color: #fff;
  font: 700 22px "Liberation Sans", "Noto Sans CJK SC", sans-serif;
  white-space: nowrap;
`;

const App = () => (
  <Page>
    <GlobalStyle />
    <Toolbars />
    <Body>
      <LeftPanels />
      <Canvas>
        <SheetFrame />
      </Canvas>
    </Body>
    <TreeMenu />
    <Arrows />
    <SheetDialog />
    <Ribbon>
      <RibbonBrand>9SUG</RibbonBrand>
      <RibbonSlogan>学UG就上UG网</RibbonSlogan>
    </Ribbon>
  </Page>
);

export default App;
